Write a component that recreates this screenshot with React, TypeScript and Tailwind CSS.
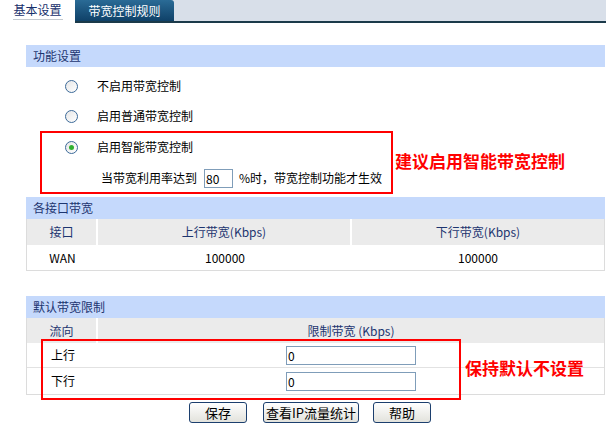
import React from "react";

const font = { fontFamily: '"Noto Sans CJK SC", "Liberation Sans", sans-serif' };

const Radio = ({ checked }: { checked?: boolean }) => (
  <span className="flex h-[13px] w-[13px] items-center justify-center rounded-full border border-[#3c6a99] bg-gradient-to-br from-[#e6e6e6] to-white">
    {checked && <span className="h-[5px] w-[5px] rounded-full bg-[#2fb02f]" />}
  </span>
);

const SectionHead = ({ title }: { title: string }) => (
  <div className="flex h-[22px] items-center bg-[#c5d9fc] pl-[7px] text-[12px] text-[#1d3570]">
    {title}
  </div>
);

const Btn = ({ label, className }: { label: string; className: string }) => (
  <button
    className={
      "flex h-[21px] items-center justify-center rounded-[3px] border border-[#1c3f6e] bg-gradient-to-b from-white to-[#e2e2dc] text-[13px] leading-none text-black " +
      className
    }
  >
    {label}
  </button>
);

export default function App() {
  return (
    <div className="relative h-[433px] w-[606px] overflow-hidden bg-white text-[12px] text-black" style={font}>
      {/* tabs */}
      <div className="flex h-[23px] bg-[#d8dfe9]">
        <div className="flex w-[75px] flex-col items-center bg-white pt-[1px]">
          <span className="text-[12px] leading-[18px] text-[#17306b]">基本设置</span>
          <span className="h-[1px] w-[50px] bg-[#c3c9cf]" />
        </div>
        <div className="flex flex-1 flex-col">
          <div className="flex h-[21px]">
            <div className="flex w-[99px] items-center justify-center rounded-tr-[3px] bg-gradient-to-b from-[#2a6b96] to-[#0f4168] text-[12px] text-white">
              带宽控制规则
            </div>
          </div>
          <div className="h-[2px] bg-[#1b3a4a]" />
        </div>
      </div>

      <div className="ml-[26px] mr-[1px] pt-[22px]">
        {/* 功能设置 */}
        <SectionHead title="功能设置" />
        <div className="flex flex-col pt-[4px]">
          <div className="flex h-[30px] items-center">
            <span className="ml-[39px]"><Radio /></span>
            <span className="ml-[19px]">不启用带宽控制</span>
          </div>
          <div className="flex h-[30px] items-center">
            <span className="ml-[39px]"><Radio /></span>
            <span className="ml-[19px]">启用普通带宽控制</span>
          </div>
          <div className="flex h-[32px] items-center">
            <span className="ml-[39px]"><Radio checked /></span>
            <span className="ml-[19px]">启用智能带宽控制</span>
          </div>
          <div className="flex h-[30px] items-center">
            <span className="ml-[75px]">当带宽利用率达到</span>
            <input
              defaultValue="80"
              className="ml-[7px] h-[19px] w-[29px] border border-[#7f9db9] px-[1px] text-[12px] outline-none"
            />
            <span className="ml-[6px]">%时，带宽控制功能才生效</span>
          </div>
        </div>

        {/* 各接口带宽 */}
        <div className="mt-[4px]">
          <SectionHead title="各接口带宽" />
          <div className="border-x border-b border-[#dcdcdc]">
            <div className="flex h-[26px] bg-[#ebebeb] text-[#1d3570]">
              <div className="flex w-[71px] items-center justify-center border-r-2 border-white">接口</div>
              <div className="flex w-[254px] items-center justify-center border-r-2 border-white">上行带宽(Kbps)</div>
              <div className="flex flex-1 items-center justify-center">下行带宽(Kbps)</div>
            </div>
            <div className="flex h-[25px] bg-white">
              <div className="flex w-[71px] items-center justify-center">WAN</div>
              <div className="flex w-[254px] items-center justify-center">100000</div>
              <div className="flex flex-1 items-center justify-center">100000</div>
            </div>
          </div>
        </div>

        {/* 默认带宽限制 */}
        <div className="mt-[25px]">
          <SectionHead title="默认带宽限制" />
          <div className="border-x border-b border-[#dcdcdc]">
            <div className="flex h-[25px] bg-[#ebebeb] text-[#1d3570]">
              <div className="flex w-[71px] items-center justify-center border-r-2 border-white">流向</div>
              <div className="flex flex-1 items-center justify-center">限制带宽 (Kbps)</div>
            </div>
            <div className="flex h-[25px] border-b border-[#e2e2e2] bg-white">
              <div className="flex w-[71px] items-center pl-[24px]">上行</div>
              <div className="flex flex-1 items-center justify-center">
                <input defaultValue="0" className="h-[19px] w-[130px] border border-[#7f9db9] px-[1px] text-[12px] outline-none" />
              </div>
            </div>
            <div className="flex h-[26px] bg-white">
              <div className="flex w-[71px] items-center pl-[24px]">下行</div>
              <div className="flex flex-1 items-center justify-center">
                <input defaultValue="0" className="h-[19px] w-[130px] border border-[#7f9db9] px-[1px] text-[12px] outline-none" />
              </div>
            </div>
          </div>
        </div>

        <div className="mt-[7px] flex pl-[163px]">
          <Btn label="保存" className="w-[58px]" />
          <Btn label="查看IP流量统计" className="ml-[16px] w-[96px]" />
          <Btn label="帮助" className="ml-[14px] w-[58px]" />
        </div>
      </div>

      {/* annotations */}
      <div className="absolute left-[40px] top-[131px] h-[63px] w-[353px] border-2 border-[#ff0000]" />
      <div className="absolute left-[395px] top-[150px] text-[17px] font-bold leading-[22px] text-[#ff0000]">
        建议启用智能带宽控制
      </div>
      <div className="absolute left-[41px] top-[339px] h-[61px] w-[420px] border-2 border-[#ff0000]" />
      <div className="absolute left-[465px] top-[357px] text-[17px] font-bold leading-[22px] text-[#ff0000]">
        保持默认不设置
      </div>
    </div>
  );
}
